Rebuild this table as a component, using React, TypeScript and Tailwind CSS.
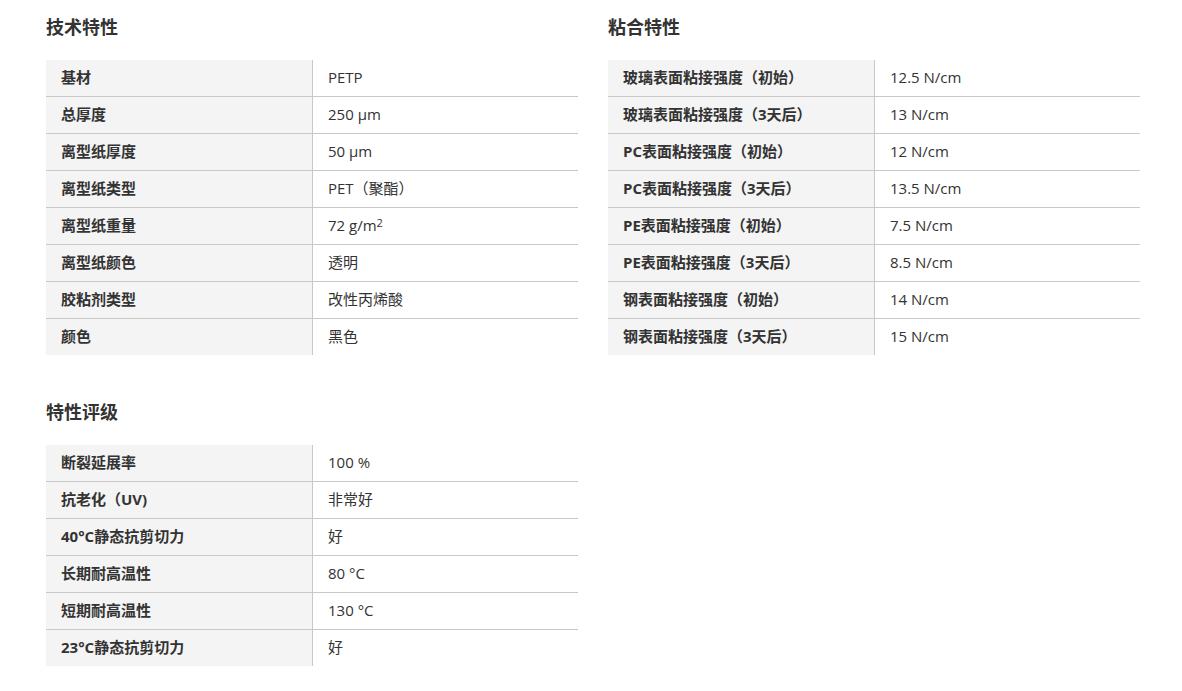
const tech: [string, React.ReactNode][] = [
  ['基材', 'PETP'],
  ['总厚度', '250 µm'],
  ['离型纸厚度', '50 µm'],
  ['离型纸类型', 'PET（聚酯）'],
  ['离型纸重量', <>72 g/m<sup className="text-[11px] relative -top-[2px]">2</sup></>],
  ['离型纸颜色', '透明'],
  ['胶粘剂类型', '改性丙烯酸'],
  ['颜色', '黑色'],
]

const adhesion: [string, React.ReactNode][] = [
  ['玻璃表面粘接强度（初始）', '12.5 N/cm'],
  ['玻璃表面粘接强度（3天后）', '13 N/cm'],
  ['PC表面粘接强度（初始）', '12 N/cm'],
  ['PC表面粘接强度（3天后）', '13.5 N/cm'],
  ['PE表面粘接强度（初始）', '7.5 N/cm'],
  ['PE表面粘接强度（3天后）', '8.5 N/cm'],
  ['钢表面粘接强度（初始）', '14 N/cm'],
  ['钢表面粘接强度（3天后）', '15 N/cm'],
]

const rating: [string, React.ReactNode][] = [
  ['断裂延展率', '100 %'],
  ['抗老化（UV)', '非常好'],
  ['40°C静态抗剪切力', '好'],
  ['长期耐高温性', '80 °C'],
  ['短期耐高温性', '130 °C'],
  ['23°C静态抗剪切力', '好'],
]

function Section({ title, rows }: { title: string; rows: [string, React.ReactNode][] }) {
  return (
    <div>
      <h3 className="text-[18px] leading-[24px] font-bold text-[#333] mb-[21px]">{title}</h3>
      <div className="w-[532px]">
        {rows.map(([label, value], i) => (
          <div
            key={i}
            className={`grid grid-cols-[267px_265px] ${i < rows.length - 1 ? 'h-[37px] border-b border-[#c8c8c8]' : 'h-[36px]'}`}
          >
            <div className="bg-[#f4f4f4] border-r border-[#c8c8c8] pl-[15px] pb-[2px] flex items-center font-bold text-[15px] text-[#333]">
              {label}
            </div>
            <div className="pl-[15px] pb-[2px] flex items-center text-[15px] text-[#333]">{value}</div>
          </div>
        ))}
      </div>
    </div>
  )
}

export default function App() {
  return (
    <div
      className="bg-white w-[1182px] h-[691px] pt-[15px] pl-[46px]"
      style={{ fontFamily: '"Open Sans", "Noto Sans CJK SC", sans-serif' }}
    >
      <div className="grid grid-cols-[532px_532px] gap-x-[30px] gap-y-[45px]">
        <Section title="技术特性" rows={tech} />
        <Section title="粘合特性" rows={adhesion} />
        <Section title="特性评级" rows={rating} />
      </div>
    </div>
  )
}
